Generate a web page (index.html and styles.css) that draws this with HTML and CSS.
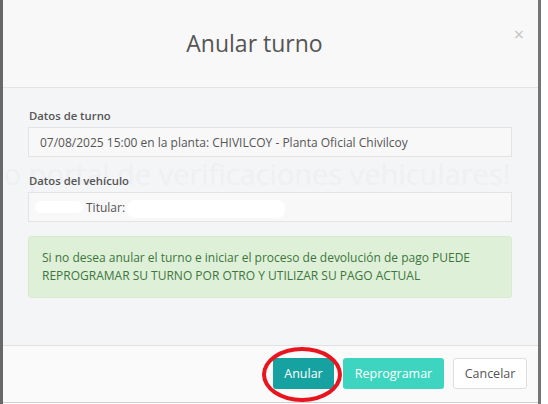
FILE: index.html
```html
<!DOCTYPE html>
<html lang="es">
<head>
    <meta charset="UTF-8">
    <meta name="viewport" content="width=device-width, initial-scale=1.0">
    <title>Anular turno</title>
    <link rel="stylesheet" href="styles.css">
</head>
<body>
    <div class="frame">
        <div class="modal">
            <div class="modal-header">
                <h2>Anular turno</h2>
                <span class="close">&times;</span>
            </div>

            <div class="modal-body">
                <!-- page behind the dialog, faintly visible -->
                <div class="ghost">
                    <p class="ghost-title">evo portal de verificaciones vehiculares!</p>
                </div>

                <label class="field-label">Datos de turno</label>
                <div class="field">07/08/2025 15:00 en la planta: CHIVILCOY - Planta Oficial Chivilcoy</div>

                <label class="field-label">Datos del vehículo</label>
                <div class="field field-vehicle">
                    <span class="redact redact-a"></span>
                    <span>Titular:</span>
                    <span class="redact redact-b"></span>
                </div>

                <div class="alert">
                    Si no desea anular el turno e iniciar el proceso de devolución de pago PUEDE REPROGRAMAR SU TURNO POR OTRO Y UTILIZAR SU PAGO ACTUAL
                </div>
            </div>

            <div class="modal-footer">
                <button class="btn btn-cancel-turn">Anular</button>
                <button class="btn btn-reprogram">Reprogramar</button>
                <button class="btn btn-default">Cancelar</button>
                <span class="mark"></span>
            </div>
        </div>
    </div>
</body>
</html>
```

FILE: styles.css
```css
* {
    margin: 0;
    padding: 0;
    box-sizing: border-box;
    font-family: "Open Sans", Arial, sans-serif;
}

body {
    background-color: #ffffff;
    overflow: hidden;
}

.frame {
    width: 541px;
    height: 404px;
    border-left: 3px solid #686868;
    border-right: 3px solid #747474;
}

.modal {
    background: #f4f5f7;
    height: 403px;
    border-bottom: 1px solid #d0d0d0;
}

.modal-header {
    position: relative;
    height: 88px;
    background: #f8f8f8;
    border-bottom: 1px solid #e4e4e4;
    display: flex;
    align-items: center;
    justify-content: center;
}

.modal-header h2 {
    font-size: 23px;
    font-weight: 400;
    color: #555;
    margin-top: -2px;
    margin-right: 32px;
}

.close {
    position: absolute;
    top: 22px;
    right: 14px;
    font-size: 18px;
    color: #c4c4c4;
}

.modal-body {
    position: relative;
    padding: 20px 25px 47px 25px;
}

.ghost {
    position: absolute;
    top: 0;
    left: 0;
    right: 0;
    bottom: 0;
    overflow: hidden;
    color: #eef0f2;
}

.ghost p {
    position: absolute;
    white-space: nowrap;
}

.ghost-title {
    top: 66px;
    left: -30px;
    font-size: 29px;
}

.field-label {
    position: relative;
    display: block;
    font-size: 11.3px;
    font-weight: 600;
    color: #555;
    margin-bottom: 4px;
    padding-left: 1px;
}

.field {
    position: relative;
    height: 30px;
    background: #f8f8f8;
    border: 1px solid #e3e3e3;
    padding: 0 11px;
    font-size: 12px;
    color: #555;
    display: flex;
    align-items: center;
    margin-bottom: 16px;
    margin-right: 1px;
}

.field-vehicle {
    gap: 2px;
    padding-left: 6px;
    margin-bottom: 14px;
}

.redact {
    display: inline-block;
    height: 12px;
    background: #ffffff;
    border-radius: 6px;
}

.redact-a {
    width: 48px;
    margin-right: 1px;
}

.redact-b {
    width: 158px;
    height: 18px;
    border-radius: 8px;
    margin-top: 4px;
}

.alert {
    position: relative;
    background: #dff0d8;
    border: 1px solid #d6ebcb;
    border-radius: 3px;
    color: #3c763d;
    font-size: 12px;
    line-height: 18px;
    padding: 12px 13px 12px 13px;
    margin-right: 1px;
}

.modal-footer {
    position: relative;
    height: 57px;
    background: #fafafa;
    border-top: 1px solid #e2e2e2;
    display: flex;
    justify-content: flex-end;
    align-items: center;
    gap: 9px;
    padding-right: 11px;
    padding-bottom: 2px;
}

.btn {
    height: 31px;
    font-size: 12.5px;
    border-radius: 3px;
    border: 1px solid transparent;
    padding: 0 8px;
    color: #ffffff;
}

.btn-cancel-turn {
    background: #17a2a2;
    width: 61px;
}

.btn-reprogram {
    background: #3dd5c0;
    width: 101px;
}

.btn-default {
    background: #ffffff;
    border-color: #dedede;
    color: #555;
    width: 74px;
}

.mark {
    position: absolute;
    left: 259px;
    top: 1px;
    width: 80px;
    height: 55px;
    border: 4px solid #e8141e;
    border-radius: 50%;
}
```
